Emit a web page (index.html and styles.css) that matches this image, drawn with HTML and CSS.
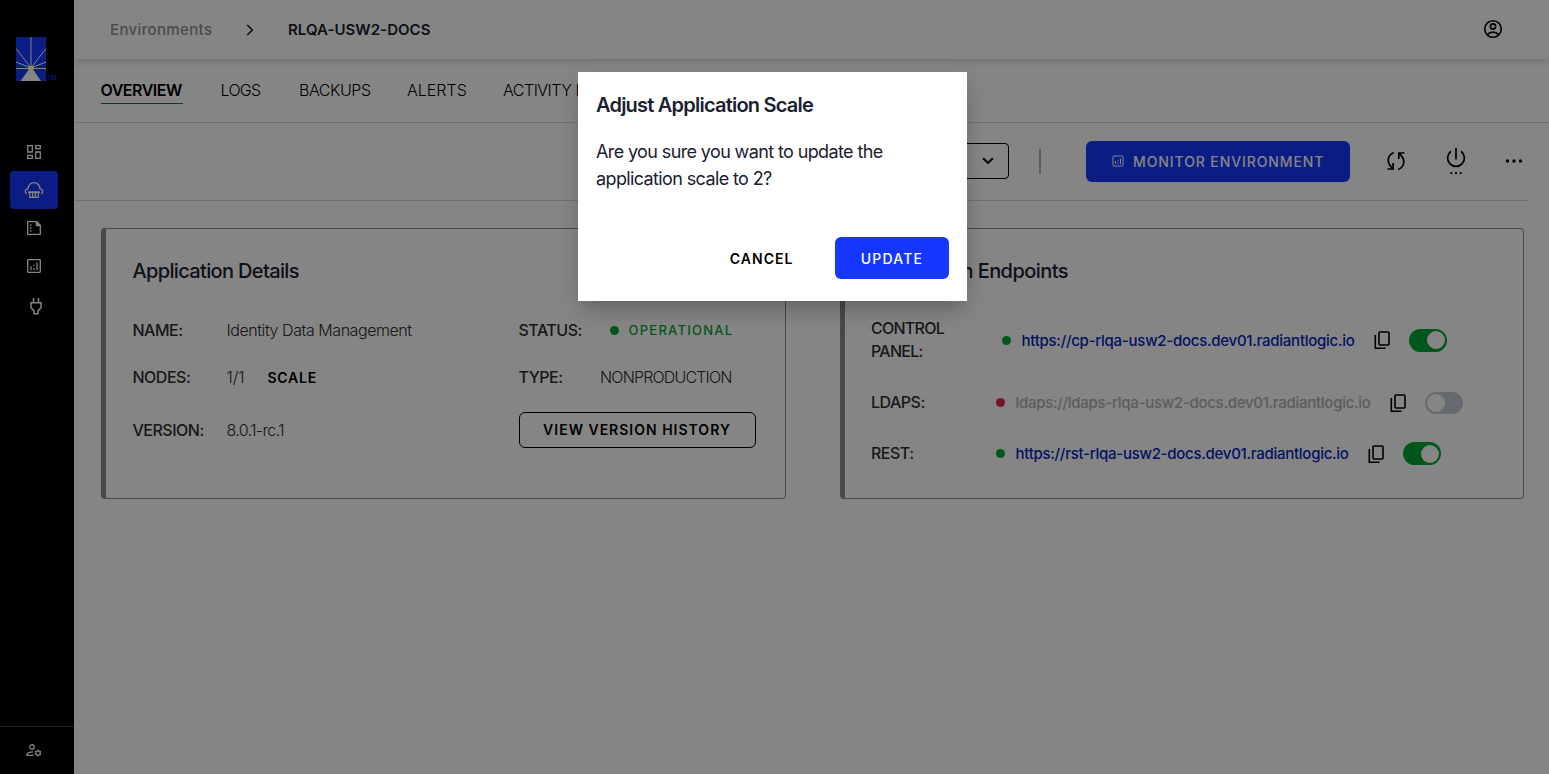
FILE: index.html
```html
<!DOCTYPE html>
<html lang="en">
<head>
<meta charset="utf-8">
<title>RLQA-USW2-DOCS</title>
<link rel="stylesheet" href="styles.css">
</head>
<body>
<div class="app">
  <aside class="sidebar">
    <div class="logo">
      <svg width="30" height="44" viewBox="0 0 30 44"><rect width="30" height="44" fill="#1736ff"/><path d="M15 0V31M0 11.500L15 31L30 11.500M0 25L15 31L30 25M0 31.500H30" stroke="#fff" stroke-width="1" fill="none"/><path d="M12.500 29h5v4l7.500 11H4.500l8-11z" fill="#fff"/></svg>
      <span class="tm">TM</span>
    </div>
    <nav class="side-nav">
      <a class="side-item"><svg width="16" height="16" viewBox="0 0 16 16" fill="none" stroke="#fff" stroke-width="1.300"><path d="M1.700 1.700h4.600v6.300H1.700zM9.700 1.700h4.600v3H9.700zM1.700 11.300h4.600v3H1.700zM9.700 8h4.600v6.300H9.700z"/></svg></a>
      <a class="side-item active"><svg width="20" height="18" viewBox="0 0 20 18" fill="none" stroke="#fff" stroke-width="1.300"><path d="M3 12.800C.4 11.800 .6 8.300 4 7.700 4.200 4 7 1.700 10 1.700s5.800 2.300 6 6c3.400.600 3.600 4.100 1 5.100"/><path d="M4 11.200h12" stroke-width="1.800"/><path d="M5.700 11.500v4.900h8.600v-4.900M8.600 11.500v4.500M11.400 11.500v4.500" stroke-width="1.200"/></svg></a>
      <a class="side-item"><svg width="16" height="16" viewBox="0 0 16 16" fill="none" stroke="#fff" stroke-width="1.300"><path d="M1.700 1.700h9l3.600 3.600v9H1.700z"/><path d="M10.500 2v3.500H14z" fill="#fff"/><path d="M4 5h1.400M4 8h1.400M4 11h1.400"/></svg></a>
      <a class="side-item"><svg width="16" height="16" viewBox="0 0 16 16" fill="none" stroke="#fff" stroke-width="1.300"><rect x="1.700" y="1.700" width="12.600" height="12.600" rx=".5"/><path d="M5 8.300v4M8 10v2.300M8 6.800v1.500M11 4.500v7.800"/></svg></a>
      <a class="side-item plug"><svg width="14" height="18" viewBox="0 0 14 18" fill="none" stroke="#fff" stroke-width="1.500"><path d="M4.500 1v4.500M9.500 1v4.500M2 5.700h10v5l-3 3.200v2.800H5v-2.800l-3-3.200z"/></svg></a>
    </nav>
    <div class="side-foot"><svg width="18" height="16" viewBox="0 0 18 16" fill="none" stroke="#fff" stroke-width="1.200"><circle cx="7" cy="4" r="2.300"/><path d="M8 8.800c-3 0-6 1.200-6 2.600v1h6.500"/><circle cx="13" cy="10" r="2.200"/><path d="M13 6.500v1.300M13 12.200v1.300M10 8.300l1.100.600M14.900 11.100l1.100.600M10 11.700l1.100-.600M14.900 8.900l1.100-.600" stroke-width="1.500"/></svg></div>
  </aside>

  <main class="main">
    <header class="topbar">
      <span class="crumb">Environments</span>
      <svg class="crumb-sep" width="8" height="12" viewBox="0 0 8 12" fill="none" stroke="#111827" stroke-width="1.600"><path d="M1.300 1L6.300 6l-5 5"/></svg>
      <span class="crumb-now">RLQA-USW2-DOCS</span>
      <svg class="user" width="20" height="20" viewBox="0 0 20 20" fill="none" stroke="#000" stroke-width="1.600"><circle cx="10" cy="10" r="8.300"/><circle cx="10" cy="7.500" r="2.600"/><path d="M4.300 15.700c3-3.400 8.400-3.400 11.400 0"/></svg>
    </header>
    <nav class="tabs">
      <a class="tab overview current"><span>OVERVIEW</span></a>
      <a class="tab logs">LOGS</a>
      <a class="tab backups">BACKUPS</a>
      <a class="tab alerts">ALERTS</a>
      <a class="tab activity">ACTIVITY LOG</a>
    </nav>
    <div class="toolbar">
      <div class="select"><svg width="12" height="8" viewBox="0 0 12 8" fill="none" stroke="#000" stroke-width="2"><path d="M1.200 1.200L6 6l4.800-4.800"/></svg></div>
      <i class="divider"></i>
      <button class="monitor"><svg width="12" height="12" viewBox="0 0 12 12" fill="none" stroke="#fff" stroke-width="1"><rect x="1" y="1" width="10" height="10" rx=".5"/><path d="M3.500 6v3M6 7.500V9M6 5v1M8.500 3.500V9"/></svg><span>MONITOR ENVIRONMENT</span></button>
      <svg class="sync" width="20" height="20" viewBox="0 0 20 20" fill="none" stroke="#000" stroke-width="1.700"><path d="M7.700 1.500C1 4.500.3 12 6.500 17M1.500 18h5.700v-6"/><path d="M12.300 18.500c6.700-3 7.400-10.500 1.200-15.500M18.500 2h-5.700v6"/></svg>
      <svg class="power" width="20" height="28" viewBox="0 0 20 28" fill="none" stroke="#000" stroke-width="1.700"><path d="M10 1v11.500M5 4.200a8.400 8.400 0 1 0 10 0"/><path d="M4.500 26h1.800M9.100 26h1.800M13.700 26h1.800" stroke-width="1.800"/></svg>
      <svg class="more" width="18" height="6" viewBox="0 0 18 6"><circle cx="2.500" cy="3" r="1.700"/><circle cx="9" cy="3" r="1.700"/><circle cx="15.500" cy="3" r="1.700"/></svg>
    </div>

    <section class="cards">
      <article class="card">
        <h2 class="h-details">Application Details</h2>
        <div class="details">
          <b class="lbl">NAME:</b><span class="val">Identity Data Management</span>
          <b class="lbl">STATUS:</b><span class="val status"><i class="dot green"></i><span class="oper">OPERATIONAL</span></span>
          <b class="lbl">NODES:</b><span class="val"><span class="count">1/1</span><span class="scale">SCALE</span></span>
          <b class="lbl">TYPE:</b><span class="val type">NONPRODUCTION</span>
          <b class="lbl">VERSION:</b><span class="val version">8.0.1-rc.1</span>
          <button class="history">VIEW VERSION HISTORY</button>
        </div>
      </article>
      <article class="card">
        <h2 class="h-endpoints">Application Endpoints</h2>
        <div class="endpoints">
          <div class="ep ep1"><b class="lbl">CONTROL<br>PANEL:</b><i class="dot green"></i><a class="url">https://cp-rlqa-usw2-docs.dev01.radiantlogic.io</a><svg class="copy" width="16" height="20" viewBox="0 0 16 20" fill="none" stroke="#000" stroke-width="1.600"><rect x="5" y="2" width="10" height="13" rx="1"/><path d="M1.300 5v13.200H11.500"/></svg><i class="toggle on"></i></div>
          <div class="ep ep2"><b class="lbl">LDAPS:</b><i class="dot red"></i><a class="url off">ldaps://ldaps-rlqa-usw2-docs.dev01.radiantlogic.io</a><svg class="copy" width="16" height="20" viewBox="0 0 16 20" fill="none" stroke="#000" stroke-width="1.600"><rect x="5" y="2" width="10" height="13" rx="1"/><path d="M1.300 5v13.200H11.500"/></svg><i class="toggle"></i></div>
          <div class="ep ep3"><b class="lbl">REST:</b><i class="dot green"></i><a class="url">https://rst-rlqa-usw2-docs.dev01.radiantlogic.io</a><svg class="copy" width="16" height="20" viewBox="0 0 16 20" fill="none" stroke="#000" stroke-width="1.600"><rect x="5" y="2" width="10" height="13" rx="1"/><path d="M1.300 5v13.200H11.500"/></svg><i class="toggle on"></i></div>
        </div>
      </article>
    </section>
    <section class="nodes">
      <h4>Identity Data Management</h4>
      <div class="nodes-head"><span>NODE NAME</span><span>STATUS</span><span>CPU</span></div>
      <div class="nodes-band"></div>
    </section>
  </main>
</div>

<div class="overlay">
  <div class="modal">
    <h3>Adjust Application Scale</h3>
    <p>Are you sure you want to update the<br>application scale to 2?</p>
    <div class="actions"><button class="cancel">CANCEL</button><button class="update">UPDATE</button></div>
  </div>
</div>
</body>
</html>
```
FILE: styles.css
```css
* { box-sizing: border-box; }
body { margin: 0; font-family: Inter, "Liberation Sans", sans-serif; color: #2e2e2e; background: #fff; overflow: hidden; }
button { font-family: inherit; margin: 0; padding: 0; border: 0; }
svg { display: block; flex: none; }
h2, h3, h4, p { margin: 0; }
span, a, h2, h3, h4 { white-space: nowrap; }

.app { display: flex; width: 1549px; height: 774px; }
.sidebar { width: 74px; background: #000; display: flex; flex-direction: column; flex: none; }
.logo { display: flex; align-items: flex-end; gap: 1px; padding: 37px 0 0 16px; height: 81px; }
.tm { font-size: 6px; line-height: 6px; color: #1736ff; }
.side-nav { margin-top: 52px; display: flex; flex-direction: column; padding-left: 10px; }
.side-item { width: 48px; height: 38px; border-radius: 4px; display: flex; align-items: center; justify-content: center; }
.side-item.active { background: #1736ff; }
.plug { padding: 3px 0 0 4px; }
.side-foot { margin-top: auto; height: 48px; border-top: 1px solid #3a3a3a; display: flex; align-items: center; padding-left: 25px; }

.main { flex: 1; display: flex; flex-direction: column; min-width: 0; }
.topbar { height: 59px; flex: none; display: flex; align-items: center; padding: 0 46px 0 36px; box-shadow: 0 2px 8px rgba(0, 0, 0, .18); font-size: 15px; font-weight: 500; }
.crumb { color: #8f8f8f; width: 136px; letter-spacing: .36px; }
.crumb-sep { margin-right: 34px; }
.crumb-now { color: #1b2130; font-weight: 600; letter-spacing: .05px; }
.user { margin-left: auto; margin-bottom: 2px; }

.tabs { height: 64px; flex: none; display: flex; padding: 20px 0 0 26.500px; border-bottom: 1px solid #d6d6d6; font-size: 16px; font-weight: 300; color: #000; }
.tab { line-height: 22px; height: 25px; }
.overview { width: 120px; font-weight: 600; letter-spacing: -.5px; }
.overview span { display: inline-block; height: 25px; width: 82px; border-bottom: 1px solid #0c7a43; }
.logs { width: 78.500px; letter-spacing: -.68px; }
.backups { width: 108px; letter-spacing: -.42px; }
.alerts { width: 96px; letter-spacing: 0; }
.activity { letter-spacing: -.5px; }

.toolbar { height: 78px; flex: none; margin-right: 21px; border-bottom: 1px solid #d6d6d6; display: flex; align-items: center; justify-content: flex-end; padding: 0 5.500px 1px 0; }
.select { width: 240px; height: 36px; border: 1px solid #000; border-radius: 4px; display: flex; align-items: center; justify-content: flex-end; padding-right: 14px; }
.divider { width: 2px; height: 25px; background: #b4b4b4; margin: 0 45.500px 0 30px; }
.monitor { width: 264px; height: 41px; border-radius: 6px; background: #1736ff; color: #fff; font-size: 14px; font-weight: 500; letter-spacing: .9px; display: flex; align-items: center; padding-left: 26px; gap: 9px; margin-right: 35.500px; }
.sync { margin-right: 40px; }
.power { margin-right: 39px; }

.cards { display: flex; gap: 54px; padding: 27px 25px 0 27px; }
.card { height: 271px; flex: 1; border: 1px solid #8d8d8d; border-left-width: 5px; border-radius: 4px; padding: 29px 0 0 26.500px; }
.card h2 { font-size: 20px; line-height: 26px; font-weight: 500; color: #1b2130; }
.h-details { letter-spacing: -.65px; }
.h-endpoints { letter-spacing: -.56px; }
.lbl { font-size: 16px; line-height: 23px; font-weight: 500; letter-spacing: -.5px; }
.details { display: grid; grid-template-columns: 94px 292px 81.500px 1fr; grid-template-rows: 47px 47px 59px; align-items: center; padding-top: 23px; font-size: 16px; font-weight: 300; }
.val { display: flex; align-items: center; letter-spacing: -.44px; margin-bottom: 1px; }
.version { letter-spacing: -.62px; }
.type { letter-spacing: -.83px; }
.status { padding-left: 9.500px; gap: 10px; }
.oper { margin-bottom: 1px; }
.dot { width: 9px; height: 9px; border-radius: 50%; flex: none; }
.green { background: #00a835; }
.red { background: #e0294f; }
.oper { font-size: 13px; font-weight: 500; color: #00a835; letter-spacing: 1.250px; }
.count { letter-spacing: -.1px; width: 41px; }
.scale { font-size: 14px; font-weight: 600; color: #000; letter-spacing: .75px; }
.history { grid-column: 3 / 5; width: 237px; height: 36px; border: 1px solid #000; border-radius: 6px; background: none; font-size: 14px; font-weight: 600; letter-spacing: 1px; color: #000; margin-bottom: 2px; }

.endpoints { padding-top: 25px; }
.ep { display: flex; align-items: center; }
.ep .lbl { width: 124.500px; }
.ep1 { height: 62px; }
.ep1 .lbl { width: 130.500px; letter-spacing: -.75px; }
.ep2 { height: 63px; }
.ep3 { height: 39px; }
.url { font-size: 15px; font-weight: 500; color: #0626b8; margin: 0 19px 0 11px; letter-spacing: -.26px; }
.url.off { color: #b0b0b0; letter-spacing: -.28px; }
.ep3 .url { letter-spacing: -.27px; }
.copy { margin-right: 19px; }
.toggle { width: 38px; height: 22px; border-radius: 12px; background: #c4ccd6; padding: 2px; display: flex; }
.toggle::before { content: ""; width: 18px; height: 18px; border-radius: 50%; background: #fff; }
.toggle.on { height: 23px; background: #00a835; justify-content: flex-end; align-items: center; }

.nodes { padding-top: 42px; color: #fdfdfd; }
.nodes h4 { padding-left: 36px; font-size: 17.500px; line-height: 24px; font-weight: 600; letter-spacing: -.45px; }
.nodes-head { height: 64px; padding: 30px 0 0 27px; display: grid; grid-template-columns: 256px 258px 1fr; font-size: 14px; line-height: 22px; font-weight: 600; }
.nodes-band { height: 68px; background: #fdfdfd; }

.overlay { position: absolute; inset: 0; background: rgba(0, 0, 0, .48); }
.modal { position: absolute; left: 578px; top: 72px; width: 389px; height: 229px; background: #fff; padding: 19px 18px 22px; box-shadow: 0 10px 20px -4px rgba(0, 0, 0, .3); color: #1b2130; display: flex; flex-direction: column; }
.modal h3 { font-size: 20px; line-height: 28px; font-weight: 600; letter-spacing: -.78px; }
.modal p { font-size: 18px; line-height: 27px; margin-top: 19px; font-weight: 400; letter-spacing: -.62px; }
.actions { margin-top: auto; display: flex; justify-content: flex-end; align-items: center; gap: 41.500px; }
.cancel { background: none; color: #000; font-size: 14px; font-weight: 600; letter-spacing: 1.050px; }
.update { width: 114px; height: 42px; border-radius: 6px; background: #1736ff; color: #fff; font-size: 14px; font-weight: 500; letter-spacing: 1.200px; }
```
